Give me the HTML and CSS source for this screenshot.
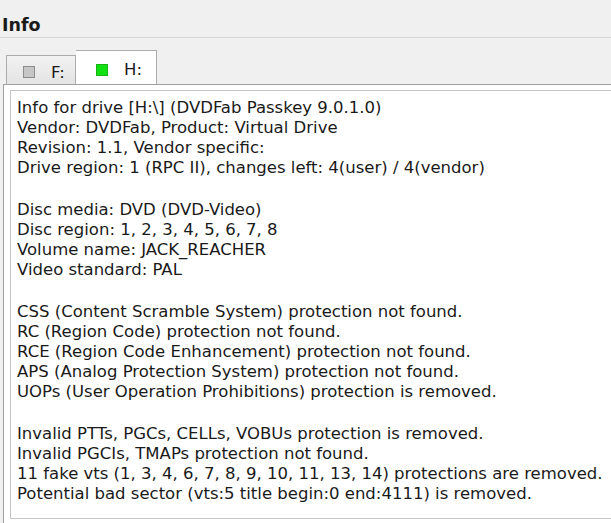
FILE: index.html
```html
<!DOCTYPE html>
<html>
<head>
<meta charset="utf-8">
<link rel="stylesheet" href="styles.css">
</head>
<body>
<div class="title">Info</div>
<div class="tabs">
  <div class="tab tab-off"><span class="box box-gray"></span><span class="tab-label">F:</span></div>
  <div class="tab tab-on"><span class="box box-green"></span><span class="tab-label">H:</span></div>
</div>
<div class="panel">
  <div class="textbox">
    <div class="group">
      <div>Info for drive [H:\] (DVDFab Passkey 9.0.1.0)</div>
      <div>Vendor: DVDFab, Product: Virtual Drive</div>
      <div>Revision: 1.1, Vendor specific:</div>
      <div>Drive region: 1 (RPC II), changes left: 4(user) / 4(vendor)</div>
    </div>
    <div class="group">
      <div>Disc media: DVD (DVD-Video)</div>
      <div>Disc region: 1, 2, 3, 4, 5, 6, 7, 8</div>
      <div>Volume name: JACK_REACHER</div>
      <div>Video standard: PAL</div>
    </div>
    <div class="group">
      <div>CSS (Content Scramble System) protection not found.</div>
      <div>RC (Region Code) protection not found.</div>
      <div>RCE (Region Code Enhancement) protection not found.</div>
      <div>APS (Analog Protection System) protection not found.</div>
      <div>UOPs (User Operation Prohibitions) protection is removed.</div>
    </div>
    <div class="group">
      <div>Invalid PTTs, PGCs, CELLs, VOBUs protection is removed.</div>
      <div>Invalid PGCIs, TMAPs protection not found.</div>
      <div>11 fake vts (1, 3, 4, 6, 7, 8, 9, 10, 11, 13, 14) protections are removed.</div>
      <div>Potential bad sector (vts:5 title begin:0 end:4111) is removed.</div>
    </div>
  </div>
</div>
</body>
</html>
```
FILE: styles.css
```css
html, body {
  margin: 0;
  padding: 0;
  background: #f0f0f0;
  overflow: hidden;
  height: 523px;
}
body {
  font-family: "DejaVu Sans", sans-serif;
  color: #1a1a1a;
}
.title {
  height: 38px;
  box-sizing: border-box;
  padding: 15px 0 0 2px;
  font-size: 17.5px;
  font-weight: bold;
  line-height: 20px;
  border-bottom: 1px solid #d6d6d6;
  color: #1a1a1a;
}
.tabs {
  display: flex;
  align-items: flex-end;
  height: 46px;
  padding-left: 6px;
  box-sizing: border-box;
}
.tab {
  display: flex;
  align-items: center;
  box-sizing: border-box;
  border: 1px solid #acacac;
  border-bottom: none;
  font-size: 16.5px;
}
.tab-off {
  width: 70px;
  height: 29px;
  padding: 4px 0 0 16px;
  background: linear-gradient(#f2f2f2, #e4e4e4);
}
.tab-on {
  width: 81px;
  height: 34px;
  padding: 4px 0 0 20px;
  background: #ffffff;
  border-left: none;
}
.box {
  width: 12px;
  height: 12px;
  box-sizing: border-box;
  display: inline-block;
}
.box-gray {
  background: #c6c6c6;
  border: 1px solid #8c8c8c;
}
.box-green {
  background: #11e011;
  border: 1px solid #16b416;
}
.tab-label {
  margin-left: 16px;
}
.panel {
  margin-left: 3px;
  width: 660px;
  height: 460px;
  border: 1px solid #a0a0a0;
  background: #ffffff;
  padding: 5px 0 0 6px;
  box-sizing: border-box;
}
.textbox {
  border: 1px solid #c4c4c4;
  background: #ffffff;
  height: 429px;
  box-sizing: border-box;
  padding: 7px 6px 0 6px;
  font-size: 16.5px;
  line-height: 20px;
}
.group {
  margin-bottom: 22px;
}
.group:last-child {
  margin-bottom: 0;
}
```
